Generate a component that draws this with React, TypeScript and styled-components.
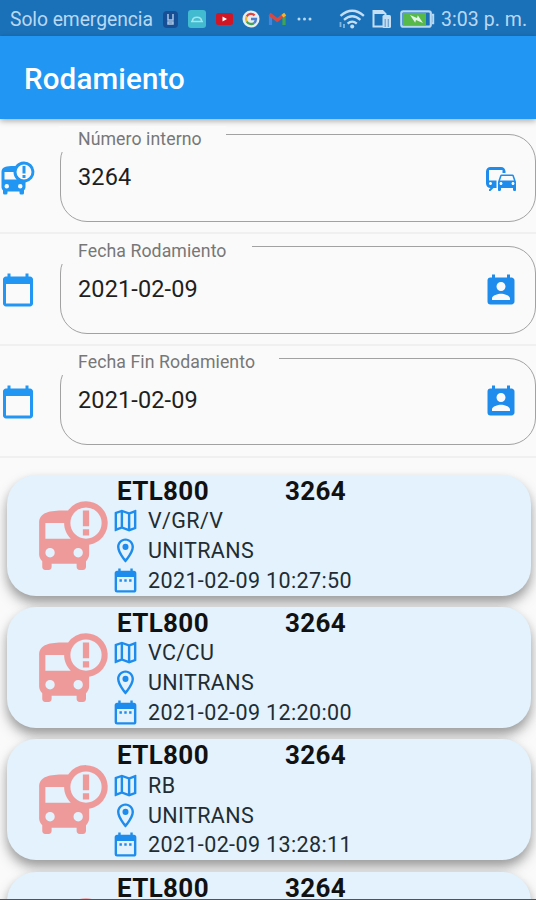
import React from "react";
import styled, { createGlobalStyle } from "styled-components";
import {
  MdBusAlert,
  MdCalendarToday,
  MdCommute,
  MdDateRange,
  MdOutlineLocationOn,
  MdOutlineMap,
  MdPermContactCalendar,
} from "react-icons/md";

const GlobalStyle = createGlobalStyle`
  * { box-sizing: border-box; }
  body { margin: 0; background: #fafafa; font-family: Roboto, "Noto Sans", sans-serif; }
`;

const Screen = styled.div`
  width: 536px;
  height: 900px;
  overflow: hidden;
  display: flex;
  flex-direction: column;
  background: #fafafa;
  border-bottom: 1.5px solid #4a5561;
`;

const StatusBar = styled.header`
  flex: none;
  height: 36px;
  display: flex;
  align-items: center;
  padding: 2px 0 0 10px;
  background: #1b71b8;
  color: #b9d8f1;
  font-size: 19.5px;
  white-space: nowrap;
`;

const Carrier = styled.span`
  flex: none;
  width: 153px;
  font-size: 19.3px;
  letter-spacing: -0.05px;
`;

const StatusIcon = styled.svg<{ $gap?: number }>`
  flex: none;
  display: block;
  margin-left: ${(p) => p.$gap ?? 0}px;
`;

const Clock = styled.span`
  margin-left: 6px;
  letter-spacing: 0.05px;
`;

const AppBar = styled.div`
  flex: none;
  position: relative;
  height: 83px;
  display: flex;
  align-items: center;
  padding: 3px 25px 0 24px;
  background: #2196f3;
  box-shadow: 0 2px 6px rgba(0, 0, 0, 0.32);
`;

const Title = styled.h1`
  margin: 0;
  color: #fff;
  font-size: 29.5px;
  font-weight: 500;
  letter-spacing: 0.15px;
`;

const Form = styled.section`
  flex: none;
`;

const FieldRow = styled.div`
  height: 111.8px;
  display: flex;
  align-items: flex-start;
  border-bottom: 2px solid #f0f0f0;

  &:first-child {
    height: 115px;
    padding-top: 3px;
  }
`;

const LeadIcon = styled.div`
  width: 60px;
  padding-top: 38px;
  color: #2196f3;

  svg {
    display: block;
  }
`;

const Outline = styled.div`
  position: relative;
  flex: 1;
  height: 87.5px;
  margin-top: 12px;
  display: flex;
  align-items: flex-start;
  justify-content: space-between;
  padding: 25.5px 16.5px 0 17px;
  border: 1.5px solid #a2a2a2;
  border-radius: 27px;
`;

const Label = styled.label<{ $width: number }>`
  position: absolute;
  left: -2px;
  top: -9.5px;
  width: ${(p) => p.$width}px;
  height: 26px;
  padding-left: 19px;
  background: #fafafa;
  color: #777;
  font-size: 17.7px;
  line-height: 26px;
  letter-spacing: 0.08px;
  white-space: nowrap;
`;

const Value = styled.span`
  color: #1f1f1f;
  font-size: 23.5px;
  line-height: 32px;
  letter-spacing: 0.12px;
`;

const TrailIcon = styled.span`
  color: #1e8cec;
  line-height: 0;
`;

const List = styled.main`
  flex: 1;
  min-height: 0;
  display: flex;
  flex-direction: column;
  gap: 11.4px;
  padding: 17px 5px 0 7px;
  overflow: hidden;
`;

const Card = styled.article`
  flex: none;
  height: 121px;
  display: flex;
  border-radius: 29px;
  background: #e3f2fd;
  box-shadow: 0 8px 14px rgba(0, 0, 0, 0.26), 0 5px 8px rgba(0, 0, 0, 0.16);
`;

const Vehicle = styled.div`
  width: 104px;
  padding: 23px 0 0 28.5px;
  color: #ef9a9a;

  svg {
    display: block;
  }
`;

const Details = styled.div`
  padding-top: 1px;
`;

const Heading = styled.div`
  display: flex;
  height: 30px;
  padding-left: 6px;
  color: #111;
  font-size: 26px;
  font-weight: 700;
  line-height: 31px;
  letter-spacing: 0.35px;
`;

const Plate = styled.span`
  width: 168px;
`;

const InfoLine = styled.div`
  display: flex;
  align-items: center;
  gap: 8px;
  height: 29.8px;
  color: #222c33;
  font-size: 21.5px;
  letter-spacing: 0.38px;

  svg {
    color: #1e8cec;
  }
`;

const fields = [
  { label: "Número interno", value: "3264", gap: 167, bus: true },
  { label: "Fecha Rodamiento", value: "2021-02-09", gap: 193, bus: false },
  { label: "Fecha Fin Rodamiento", value: "2021-02-09", gap: 220, bus: false },
];

const trips = [
  { route: "V/GR/V", date: "2021-02-09 10:27:50" },
  { route: "VC/CU", date: "2021-02-09 12:20:00" },
  { route: "RB", date: "2021-02-09 13:28:11" },
];

function StatusIcons() {
  return (
    <>
      <StatusIcon width="15" height="17" viewBox="0 0 15 17">
        <rect width="15" height="17" rx="4" fill="#164f96" />
        <path d="M5 3v6h5V3M5 11h5v2H5z" fill="none" stroke="#a9c6e4" strokeWidth="1.5" />
      </StatusIcon>
      <StatusIcon $gap={10} width="18" height="18" viewBox="0 0 18 18">
        <rect width="18" height="18" rx="3" fill="#42bad0" />
        <path d="M3 11.5h12M4.5 11c0-5 9-5 9 0" fill="none" stroke="#a0e5eb" strokeWidth="1.6" />
      </StatusIcon>
      <StatusIcon $gap={10} width="17" height="14" viewBox="0 0 17 14">
        <rect y="1" width="17" height="12" rx="2.5" fill="#cf1626" />
        <path d="M6.5 4.5v5l4.5-2.5z" fill="#fff" />
      </StatusIcon>
      <StatusIcon $gap={9} width="18" height="18" viewBox="0 0 18 18">
        <circle cx="9" cy="9" r="8.5" fill="#e9edf1" />
        <g fill="none" strokeWidth="2.3">
          <path d="M12.6 5.4A5 5 0 0 0 4.7 6.5" stroke="#dc4540" />
          <path d="M4.7 6.5a5 5 0 0 0 0 5" stroke="#ecb831" />
          <path d="M4.7 11.5a5 5 0 0 0 7.6 1.3" stroke="#43a35a" />
          <path d="M12.3 12.8A5 5 0 0 0 14 9H9" stroke="#4a7fd1" />
        </g>
      </StatusIcon>
      <StatusIcon $gap={8} width="19" height="14" viewBox="0 0 19 14">
        <path d="M2.5 4v9" stroke="#4285dc" strokeWidth="3.2" />
        <path d="M16 4v9" stroke="#40a552" strokeWidth="3.2" />
        <path d="M1.5 2.2l7.7 6 7.8-6" fill="none" stroke="#d94840" strokeWidth="3.4" />
        <path d="M14.4 4.3l2.8-2.2" stroke="#e9b92f" strokeWidth="3.3" />
      </StatusIcon>
      <StatusIcon $gap={10} width="15" height="4" viewBox="0 0 15 4" fill="#b9d8f1">
        <circle cx="2" cy="2" r="1.5" />
        <circle cx="7.5" cy="2" r="1.5" />
        <circle cx="13" cy="2" r="1.5" />
      </StatusIcon>
      <StatusIcon $gap={26} width="28" height="20" viewBox="0 0 28 20">
        <g fill="none" stroke="#c4def4" strokeWidth="2.3">
          <path d="M2.5 6.8q11.7-10 23.4 0M6 10.8q8.2-7 16.4 0M9.6 14.6q4.6-4 9.2 0" />
        </g>
        <circle cx="14.2" cy="17.4" r="2" fill="#c4def4" />
        <path d="M2.5 13v5M6 15v4" stroke="#82b6df" strokeWidth="1.8" />
      </StatusIcon>
      <StatusIcon $gap={6} width="20" height="20" viewBox="0 0 20 20">
        <path d="M1.5 2h9l3 3v12.5h-12z" fill="none" stroke="#c4def4" strokeWidth="2" />
        <path d="M1 1h9.5l3.5 4H1z" fill="#c4def4" />
        <rect x="10.5" y="6" width="8.5" height="13" rx="1.5" fill="#c4def4" />
        <path d="M13.2 10v8M16.3 10v8" stroke="#6b9fd0" strokeWidth="1.2" />
      </StatusIcon>
      <StatusIcon $gap={8} width="35" height="18" viewBox="0 0 35 18">
        <rect x="1.3" y="1.3" width="29.5" height="15.4" rx="2" fill="#1b71b8" stroke="#b9d8f1" strokeWidth="2.2" />
        <path d="M3 3h23v12H3z" fill="#56b94a" />
        <path d="M32 4.8h1.2v8.4H32" fill="none" stroke="#b9d8f1" strokeWidth="2" />
        <path d="M10 5l7 3 .8-2.8L23 13l-7-3-.8 2.8z" fill="#e2f4e7" />
      </StatusIcon>
    </>
  );
}

export default function App() {
  return (
    <Screen>
      <GlobalStyle />
      <StatusBar>
        <Carrier>Solo emergencia</Carrier>
        <StatusIcons />
        <Clock>3:03 p. m.</Clock>
      </StatusBar>
      <AppBar>
        <Title>Rodamiento</Title>
      </AppBar>
      <Form>
        {fields.map((field) => (
          <FieldRow key={field.label}>
            <LeadIcon>{field.bus ? <MdBusAlert size={36} /> : <MdCalendarToday size={36} />}</LeadIcon>
            <Outline>
              <Label $width={field.gap}>{field.label}</Label>
              <Value>{field.value}</Value>
              <TrailIcon>
                {field.bus ? <MdCommute size={36} /> : <MdPermContactCalendar size={36} />}
              </TrailIcon>
            </Outline>
          </FieldRow>
        ))}
      </Form>
      <List>
        {trips.map((trip) => (
          <Card key={trip.date}>
            <Vehicle>
              <MdBusAlert size={75} />
            </Vehicle>
            <Details>
              <Heading>
                <Plate>ETL800</Plate>
                <span>3264</span>
              </Heading>
              <InfoLine>
                <MdOutlineMap size={29} />
                {trip.route}
              </InfoLine>
              <InfoLine>
                <MdOutlineLocationOn size={29} />
                UNITRANS
              </InfoLine>
              <InfoLine>
                <MdDateRange size={29} />
                {trip.date}
              </InfoLine>
            </Details>
          </Card>
        ))}
        <Card>
          <Vehicle>
            <MdBusAlert size={75} />
          </Vehicle>
          <Details>
            <Heading>
              <Plate>ETL800</Plate>
              <span>3264</span>
            </Heading>
          </Details>
        </Card>
      </List>
    </Screen>
  );
}
